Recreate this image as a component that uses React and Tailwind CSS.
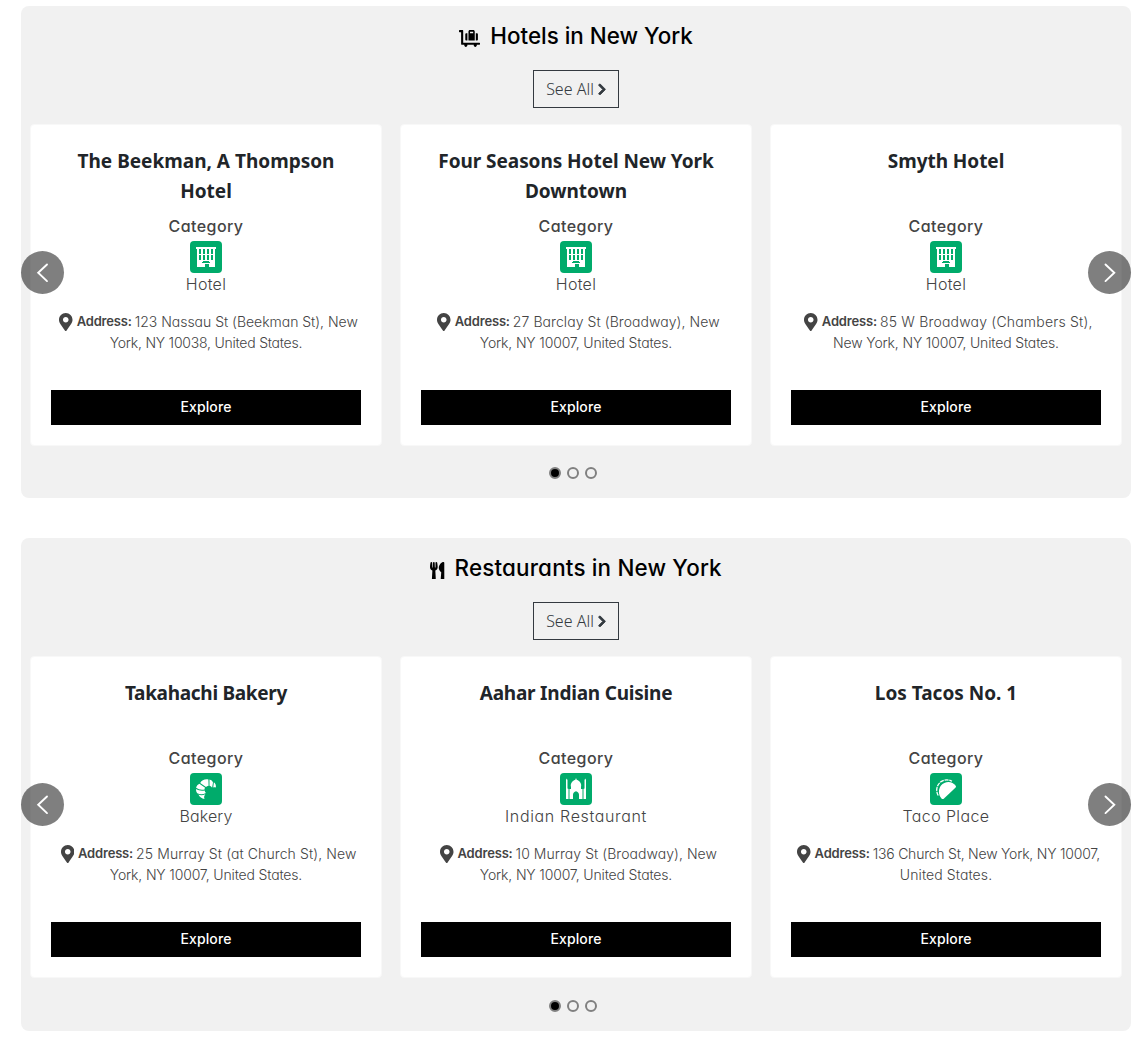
import { FaLuggageCart, FaUtensils, FaChevronRight, FaMapMarkerAlt } from 'react-icons/fa';

function HotelIcon() {
  return (
    <svg viewBox="0 0 32 32" className="size-8 rounded bg-[#00ab6b]" shapeRendering="crispEdges">
      <path fill="#fff" d="M6 6h20v2h-1v18h-6v-3h-4v3H7V8H6z" />
      <path fill="#00ab6b" d="M9 8h2v5H9zM13 8h2v5h-2zM17 8h2v5h-2zM21 8h2v5h-2zM9 14h2v5H9zM13 14h2v5h-2zM17 14h2v5h-2zM21 14h2v5h-2zM13 20h6v1h1v1h-8v-1h1z" />
    </svg>
  );
}

function BakeryIcon() {
  return (
    <svg viewBox="0 0 32 32" className="size-8 rounded bg-[#00ab6b]" fill="#fff">
      <path d="M10.2 10C11.8 7.1 15 5.8 18.4 6.5l.2 6.2c-1.2.1-2 .6-2.6 1.2z" />
      <path d="M19.5 6.600c1.700.5 3 1.500 3.500 2.900l-.9 5.200c-.6-1-1.500-1.700-2.600-1.900z" />
      <path d="M23.900 9.300c1.600 1.200 2.300 3.100 2 5.200-1-.5-1.800-.5-2.700 0z" />
      <path d="M9.400 10.700l5.700 4c-.5.6-.6 1.100-.5 1.700-3 .8-5.900.2-8.500-1.600.5-2 1.600-3.400 3.300-4.100z" />
      <path d="M6.100 16.100c2.600 1.600 5.500 2.100 8.500 1.400.1 1 .6 1.800 1.300 2.400-3.100 1.800-5.900 1.700-8.600.3-1-1.200-1.400-2.500-1.200-4.100z" />
      <path d="M8.400 21.600c2.400.9 4.600.7 6.900-.4-1.200 1.500-1.500 3-.8 4.900-2.700-.4-4.900-2-6.100-4.500z" />
    </svg>
  );
}

function TempleIcon() {
  return (
    <svg viewBox="0 0 32 32" className="size-8 rounded bg-[#00ab6b]" fill="#fff">
      <path d="M6 26V7l.7-1.500.8 1.500v8.600L8.500 16v10zM23.500 26V16l1-.4V7l.8-1.500L26 7v19z" />
      <path d="M16 5l.7 1.700c3.400 1.500 5.200 3.900 4.300 7.300v2h1.500v10H19v-4.200c0-1.800-1.300-3-3-3.500-1.700.5-3 1.700-3 3.500V26H9.500V16H11v-2c-.9-3.400.9-5.800 4.300-7.300z" />
    </svg>
  );
}

function TacoIcon() {
  return (
    <svg viewBox="0 0 32 32" className="size-8 rounded bg-[#00ab6b]">
      <path fill="#fff" d="M25.700 12.800c.5.8.3 1.400-.3 2L14 25.500c-.8.7-1.700.8-2.500 0-3.300-3.900-3.400-9-.5-13 3.500-4.500 11.300-5.100 14.700.3z" />
      <path fill="none" stroke="#fff" strokeWidth="1.300" strokeDasharray="4 .8" d="M8.200 22.500C5.600 18 6.500 12.300 10.500 9.100c3.500-2.700 8.200-2.700 11.500-.9" />
    </svg>
  );
}

const sections = [
  {
    title: 'Hotels in New York',
    tracking: 'tracking-[0px]',
    Icon: FaLuggageCart,
    iconClass: 'mr-[10px] mt-[4px] h-[17px] w-[21px]',
    dotsClass: 'mt-[21px]',
    height: 'h-[492px]',
    cards: [
      {
        name: ['The Beekman, A Thompson', 'Hotel'], nameTracking: 'tracking-[0px]',
        Category: HotelIcon, category: 'Hotel', categoryTracking: 'tracking-[0.3px]',
        address: '123 Nassau St (Beekman St), New', addressTracking: 'tracking-[-0.02px]',
        rest: 'York, NY 10038, United States.', restTracking: 'tracking-[-0.23px]',
      },
      {
        name: ['Four Seasons Hotel New York', 'Downtown'], nameTracking: 'tracking-[-0.05px]',
        Category: HotelIcon, category: 'Hotel', categoryTracking: 'tracking-[0.3px]',
        address: '27 Barclay St (Broadway), New', addressTracking: 'tracking-[0.07px]',
        rest: 'York, NY 10007, United States.', restTracking: 'tracking-[-0.16px]',
      },
      {
        name: ['Smyth Hotel'], nameTracking: 'tracking-[-0.05px]',
        Category: HotelIcon, category: 'Hotel', categoryTracking: 'tracking-[0.3px]',
        address: '85 W Broadway (Chambers St),', addressTracking: 'tracking-[0.2px]',
        rest: 'New York, NY 10007, United States.', restTracking: 'tracking-[-0.15px]',
      },
    ],
  },
  {
    title: 'Restaurants in New York',
    tracking: 'tracking-[0.18px]',
    Icon: FaUtensils,
    iconClass: 'mr-[10px] mt-[5px] h-[17.6px] w-[14.3px]',
    dotsClass: 'mt-[22px]',
    height: 'h-[493px]',
    cards: [
      {
        name: ['Takahachi Bakery'], nameTracking: 'tracking-[-0.3px]',
        Category: BakeryIcon, category: 'Bakery', categoryTracking: 'tracking-[0.12px]',
        address: '25 Murray St (at Church St), New', addressTracking: 'tracking-[0.1px]',
        rest: 'York, NY 10007, United States.', restTracking: 'tracking-[-0.16px]',
      },
      {
        name: ['Aahar Indian Cuisine'], nameTracking: 'tracking-[-0.22px]',
        Category: TempleIcon, category: 'Indian Restaurant', categoryTracking: 'tracking-[0.65px]',
        address: '10 Murray St (Broadway), New', addressTracking: 'tracking-[0.05px]',
        rest: 'York, NY 10007, United States.', restTracking: 'tracking-[-0.16px]',
      },
      {
        name: ['Los Tacos No. 1'], nameTracking: 'tracking-[0px]',
        Category: TacoIcon, category: 'Taco Place', categoryTracking: 'tracking-[0.39px]',
        address: '136 Church St, New York, NY 10007,', addressTracking: 'tracking-[-0.22px]',
        rest: 'United States.', restTracking: 'tracking-[0.1px]',
      },
    ],
  },
];

function Card({ card }) {
  const { Category } = card;
  return (
    <article className="flex h-[322px] w-[352px] flex-col items-center rounded border border-[#f8f8f8] bg-white px-5 pt-[21px] pb-5 text-[#444]">
      <h3 className={`h-[70px] text-center font-['Noto_Sans'] text-[19px] leading-[30px] font-bold text-[#212529] ${card.nameTracking}`}>
        {card.name.map((line) => (
          <span key={line} className="block whitespace-nowrap">{line}</span>
        ))}
      </h3>
      <div className="h-[25px] text-base leading-5 font-medium tracking-[0.43px]">Category</div>
      <Category />
      <div className={`h-6 text-base leading-[22px] font-light ${card.categoryTracking}`}>{card.category}</div>
      <div className="mt-[14px] w-full text-center text-sm leading-[21px] font-light">
        <div className="flex items-center justify-center pl-[5px] whitespace-nowrap">
          <FaMapMarkerAlt className="mr-1 h-[18px] w-[13.500px] shrink-0" />
          <span className="mr-[3px] text-[13px] font-semibold tracking-[-0.18px]">Address:</span>
          <span className={card.addressTracking}>{card.address}</span>
        </div>
        <div className={card.restTracking}>{card.rest}</div>
      </div>
      <button className="mt-auto h-[35px] w-full bg-black pb-[2px] text-sm font-medium tracking-[0.1px] text-white">Explore</button>
    </article>
  );
}

function Arrow({ side }) {
  const left = side === 'left';
  return (
    <button
      aria-label={left ? 'Previous' : 'Next'}
      className={`absolute top-[245px] flex size-[43px] items-center justify-center rounded-full bg-black/50 ${left ? 'left-0' : 'right-0'}`}
    >
      <svg viewBox="0 0 20 20" className="size-5" fill="none" stroke="#fff" strokeWidth="1.900" strokeLinecap="round">
        <path d={left ? 'M14 1.500 5.200 9.800l8.800 8.300' : 'M5.500 1.500 14.300 9.800l-8.800 8.300'} />
      </svg>
    </button>
  );
}

function Section({ section }) {
  const { Icon } = section;
  return (
    <section className={`relative flex w-[1110px] flex-col rounded-lg bg-[#f1f1f1] ${section.height}`}>
      <h2 className="mt-[13px] flex h-[34px] items-center justify-center text-[22.400px] leading-[34px] font-medium text-black">
        <Icon className={section.iconClass} />
        <span className={section.tracking}>{section.title}</span>
      </h2>
      <button className="mx-auto mt-[17px] flex h-[38px] w-[86px] items-center justify-center border border-[#343a40] font-['Noto_Sans'] text-base font-[330] text-[#343a40]">
        See All
        <FaChevronRight className="ml-1 h-[12.800px] w-2 shrink-0 stroke-current stroke-[35]" />
      </button>
      <div className="mt-[16px] flex gap-[18px] px-[9px]">
        {section.cards.map((card) => (
          <Card key={card.name[0]} card={card} />
        ))}
      </div>
      <div className={`flex justify-center gap-[6px] pr-[6px] ${section.dotsClass}`}>
        <span className="size-3 rounded-full border-2 border-[#808080] bg-black" />
        <span className="size-3 rounded-full border-2 border-[#808080]" />
        <span className="size-3 rounded-full border-2 border-[#808080]" />
      </div>
      <Arrow side="left" />
      <Arrow side="right" />
    </section>
  );
}

export default function App() {
  return (
    <main className="flex min-h-[1042px] flex-col gap-10 bg-white pt-[6px] pl-[21px] font-['Inter'] [font-feature-settings:'cv11']">
      {sections.map((section) => (
        <Section key={section.title} section={section} />
      ))}
    </main>
  );
}
